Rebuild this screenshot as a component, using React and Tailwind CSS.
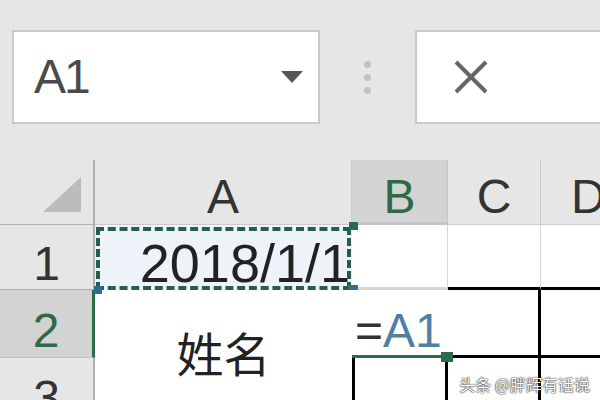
const green = "border-[#2a6b4a]";

function Hdr({ children, className = "" }) {
  return (
    <div className={`flex justify-center leading-none text-[48px] text-[#333] ${className}`}>
      {children}
    </div>
  );
}

export default function App() {
  return (
    <div
      className="relative w-[600px] h-[400px] overflow-hidden bg-[#e6e6e6]"
      style={{ fontFamily: '"Liberation Sans", "Noto Sans CJK SC", sans-serif' }}
    >
      {/* formula bar */}
      <div className="h-[160px] pt-[30px] flex items-start">
        <div className="ml-[12px] w-[308px] h-[94px] bg-white border-2 border-[#c9c9c9] flex items-center pl-[20px] pr-[15px]">
          <span className="text-[48px] leading-none tracking-[-2px] text-[#4a4a4a]">A1</span>
          <svg className="ml-auto" width="22" height="14" viewBox="0 0 22 14">
            <polygon points="0,1 22,1 11,13" fill="#555" />
          </svg>
        </div>
        <div className="w-[95px] h-[94px] flex flex-col items-center justify-center gap-[6px]">
          <span className="w-[7px] h-[7px] rounded-full bg-[#c2c2c2]" />
          <span className="w-[7px] h-[7px] rounded-full bg-[#c2c2c2]" />
          <span className="w-[7px] h-[7px] rounded-full bg-[#c2c2c2]" />
        </div>
        <div className="flex-1 h-[94px] bg-white border-2 border-r-0 border-[#c9c9c9] flex items-center pl-[36px]">
          <svg width="36" height="34" viewBox="0 0 36 34">
            <path d="M3 2 L33 32 M33 2 L3 32" stroke="#666" strokeWidth="4" />
          </svg>
        </div>
      </div>

      {/* sheet grid */}
      <div className="grid grid-cols-[95px_257px_96px_93px_59px] grid-rows-[65px_65px_68px_42px]">
        {/* header row */}
        <div className="border-r-2 border-b border-[#b0b0b0] flex items-end justify-end pr-[12px] pb-[12px]">
          <svg width="38" height="35" viewBox="0 0 38 35">
            <polygon points="38,0 38,35 0,35" fill="#bcbcbc" />
          </svg>
        </div>
        <Hdr className="pt-[13px] border-r border-b border-[#cccccc]">A</Hdr>
        <Hdr className={`pt-[13px] bg-[#d3d3d3] border-r border-[#c6c6c6] border-b-[3px] ${green}`}>
          <span className="text-[#2f6a45]">B</span>
        </Hdr>
        <Hdr className="pt-[13px] border-r border-b border-[#cccccc]">C</Hdr>
        <Hdr className="pt-[13px] pl-[30px] justify-start border-b border-[#cccccc]">D</Hdr>

        {/* row 1 */}
        <Hdr className="pt-[15px] text-[47px] border-r-2 border-b border-[#b0b0b0]">1</Hdr>
        <div className="relative bg-[#eef3f9] flex items-end justify-end pr-[2px] overflow-hidden">
          <span className="text-[54px] leading-none text-[#222]">2018/1/1</span>
          <div className="absolute inset-x-[1px] top-[2px] bottom-0 border-[4px] border-dashed border-[#245f4c]" />
        </div>
        <div className={`relative bg-white border-r border-[#d6d6d6] border-b-[3px] ${green}`}>
          <span className="absolute -left-[3px] -top-[3px] w-[9px] h-[8px] bg-[#2a6b4a]" />
          <span className="absolute -left-[4px] -bottom-[6px] w-[10px] h-[8px] bg-[#3a6d96]" />
        </div>
        <div className="bg-white border-r border-[#d6d6d6] border-b-[3px] border-b-black" />
        <div className="bg-white border-b-[3px] border-black" />

        {/* row 2 */}
        <Hdr className={`pt-[17px] text-[47px] bg-[#d3d3d3] border-r-[3px] ${green} border-b border-b-[#c3c3c3]`}>
          <span className="text-[#2f6a45]">2</span>
        </Hdr>
        <div className="relative row-span-2 bg-white flex justify-center pt-[38px]">
          <span className="text-[47px] leading-none text-[#222]" style={{ fontFamily: '"Noto Sans CJK SC", sans-serif' }}>
            姓名
          </span>
          <span className="absolute -left-[1px] -top-[4px] w-[8px] h-[8px] bg-[#2f6c8f]" />
        </div>
        <div className={`relative bg-white border-b-[3px] ${green} pt-[17px] pl-[3px] leading-none text-[48px] whitespace-nowrap`}>
          <span className="text-[#333]">=</span>
          <span className="text-[#4f7fa2]">A1</span>
          <span className="absolute -right-[5px] -bottom-[7px] w-[12px] h-[10px] bg-[#2a6b4a]" />
        </div>
        <div className="bg-white border-r-[3px] border-b-[3px] border-black" />
        <div className="bg-white border-b-[3px] border-black" />

        {/* row 3 */}
        <Hdr className="pt-[16px] text-[47px] border-r-2 border-[#b0b0b0]">3</Hdr>
        <div className="bg-white border-x-[3px] border-black" />
        <div className="bg-white border-r-[3px] border-black" />
        <div className="bg-white" />
      </div>

      <div
        className="absolute right-[10px] bottom-[8px] text-[16px] leading-none text-white [text-shadow:0_0_2px_rgba(0,0,0,0.9),0_0_1px_rgba(0,0,0,0.9)]"
        style={{ fontFamily: '"Noto Sans CJK SC", sans-serif' }}
      >
        头条 @胖辉有话说
      </div>
    </div>
  );
}
